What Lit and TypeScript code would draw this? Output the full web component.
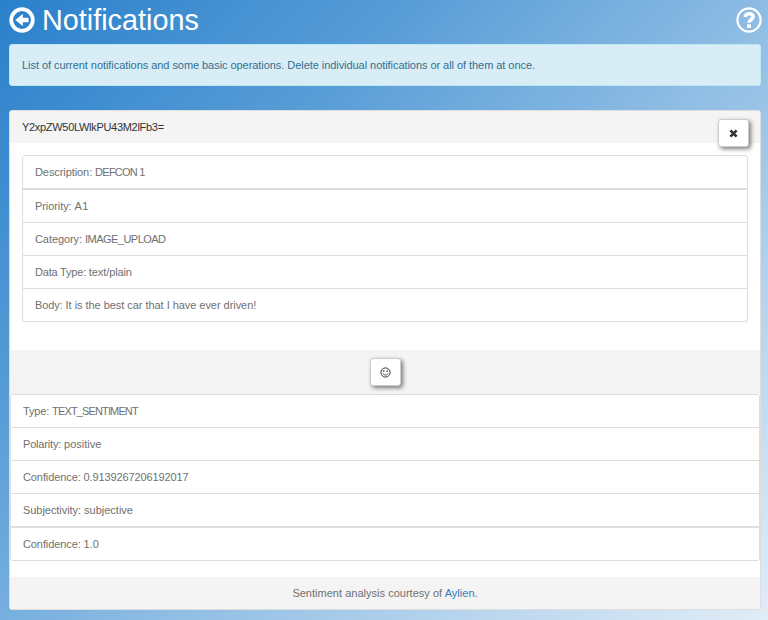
import { LitElement, html, css } from "lit";
import { customElement } from "lit/decorators.js";
import { styleMap } from "lit/directives/style-map.js";

interface Row {
  label: string;
  value: string;
  labelTrack: number;
  valueTrack: number;
}

const DETAILS: Row[] = [
  { label: "Description:", value: "DEFCON 1", labelTrack: -0.08, valueTrack: -0.75 },
  { label: "Priority:", value: "A1", labelTrack: -0.08, valueTrack: 0.3 },
  { label: "Category:", value: "IMAGE_UPLOAD", labelTrack: -0.08, valueTrack: -0.52 },
  { label: "Data Type:", value: "text/plain", labelTrack: -0.2, valueTrack: -0.1 },
  { label: "Body:", value: "It is the best car that I have ever driven!", labelTrack: -0.1, valueTrack: -0.045 },
];

const SENTIMENT: Row[] = [
  { label: "Type:", value: "TEXT_SENTIMENT", labelTrack: -0.15, valueTrack: -0.86 },
  { label: "Polarity:", value: "positive", labelTrack: -0.18, valueTrack: 0 },
  { label: "Confidence:", value: "0.9139267206192017", labelTrack: -0.1, valueTrack: -0.12 },
  { label: "Subjectivity:", value: "subjective", labelTrack: -0.05, valueTrack: 0 },
  { label: "Confidence:", value: "1.0", labelTrack: -0.1, valueTrack: 0 },
];

const track = (px: number) => styleMap({ letterSpacing: `${px}px` });

@customElement("app-root")
export class AppRoot extends LitElement {
  static styles = css`
    :host {
      display: block;
      box-sizing: border-box;
      height: 620px;
      padding: 0 7px 0 9px;
      overflow: hidden;
      font: 11px/16px "Liberation Sans", Arial, sans-serif;
      color: #707070;
      background: linear-gradient(135deg, #2a80cb 0%, #589dd7 30%, #92bfe5 58%, #e1edf7 100%);
    }
    * { box-sizing: border-box; }
    header {
      display: flex;
      align-items: center;
      height: 44px;
      margin-right: -1px;
      padding-bottom: 5px;
      color: #fff;
    }
    h1 {
      flex: 1;
      margin: 0 0 0 7px;
      font-size: 28.8px;
      line-height: 34px;
      font-weight: 400;
    }
    svg { display: block; }
    .alert {
      height: 42px;
      padding: 12px;
      border: 1px solid #bce8f1;
      border-radius: 3px;
      background: #d9edf7;
      color: #31708f;
      letter-spacing: -0.055px;
    }
    .panel {
      height: 500px;
      margin-top: 24px;
      border: 1px solid #ddd;
      border-radius: 3px;
      background: #fff;
      overflow: hidden;
    }
    .heading {
      display: flex;
      justify-content: space-between;
      height: 32px;
      padding: 8px 11px 8px 12px;
      background: #f4f4f4;
      color: #333;
    }
    .client { letter-spacing: -0.3px; }
    .btn {
      display: flex;
      align-items: center;
      justify-content: center;
      flex: none;
      width: 31px;
      height: 28px;
      padding: 0;
      border: 1px solid #ccc;
      border-radius: 3px;
      background: #fff;
      color: #333;
      box-shadow: 2px 2px 4px rgba(0, 0, 0, 0.5);
    }
    ul { margin: 0; padding: 0; list-style: none; }
    li {
      height: 33px;
      padding: 8px 12px;
      border: 1px solid #ddd;
      border-top: 0;
      background: #fff;
    }
    li:first-child { height: 34px; border-top: 1px solid #ddd; border-radius: 3px 3px 0 0; }
    li:last-child { border-radius: 0 0 3px 3px; }
    .details { margin: 12px 12px 28px; }
    .details li:nth-child(2), .results li:last-child {
      height: 34px;
      border-top: 1px solid #ddd;
    }
    .bar {
      display: flex;
      justify-content: center;
      height: 44px;
      padding-top: 8px;
      background: #f4f4f4;
    }
    .footer {
      height: 32px;
      margin-top: 16px;
      padding-top: 8px;
      background: #f4f4f4;
      text-align: center;
      letter-spacing: 0.02px;
    }
    a { color: #337ab7; text-decoration: none; }
  `;

  private row(r: Row) {
    return html`<li><span style=${track(r.labelTrack)}>${r.label} </span><span style=${track(r.valueTrack)}>${r.value}</span></li>`;
  }

  render() {
    return html`
      <header>
        <svg width="26" height="26" viewBox="0 0 26 26">
          <circle cx="13" cy="13" r="10.8" fill="none" stroke="currentColor" stroke-width="3.8" />
          <path fill="currentColor" d="M6.3 13 13.8 6.9v3.8h5.7v4.6h-5.7v3.8z" />
        </svg>
        <h1>Notifications</h1>
        <svg width="26" height="26" viewBox="0 0 26 26">
          <circle cx="13" cy="13" r="11.6" fill="none" stroke="currentColor" stroke-width="2.1" />
          <path fill="none" stroke="currentColor" stroke-width="3.5" d="M9 9.9C9.5 7.4 11 6.7 13 6.7c2.4 0 4.1 1.1 4.1 3 0 2.9-4.1 2.7-4.1 6.1" />
          <path fill="currentColor" d="M11 17.3h4v3.6h-4z" />
        </svg>
      </header>
      <div class="alert">List of current notifications and some basic operations. Delete individual notifications or all of them at once.</div>
      <section class="panel">
        <div class="heading">
          <span class="client">Y2xpZW50LWlkPU43M2lFb3=</span>
          <button class="btn" aria-label="Delete">
            <svg width="9" height="9" viewBox="0 0 9 9"><path d="m1.4 1.4 6.2 6.2M7.6 1.4 1.4 7.6" stroke="currentColor" stroke-width="2.6" /></svg>
          </button>
        </div>
        <ul class="details">${DETAILS.map((r) => this.row(r))}</ul>
        <div class="bar">
          <button class="btn" aria-label="Sentiment">
            <svg width="11" height="11" viewBox="0 0 11 11" fill="none" stroke="currentColor">
              <circle cx="5.5" cy="5.5" r="4.6" stroke-width="1" />
              <path d="M3.1 6.4c.8 2.1 4 2.1 4.8 0" stroke-width=".9" />
              <path d="M3.8 3.2v1.5M7.2 3.2v1.5" stroke-width="1.3" />
            </svg>
          </button>
        </div>
        <ul class="results">${SENTIMENT.map((r) => this.row(r))}</ul>
        <div class="footer">Sentiment analysis courtesy of <a>Aylien</a>.</div>
      </section>
    `;
  }
}
